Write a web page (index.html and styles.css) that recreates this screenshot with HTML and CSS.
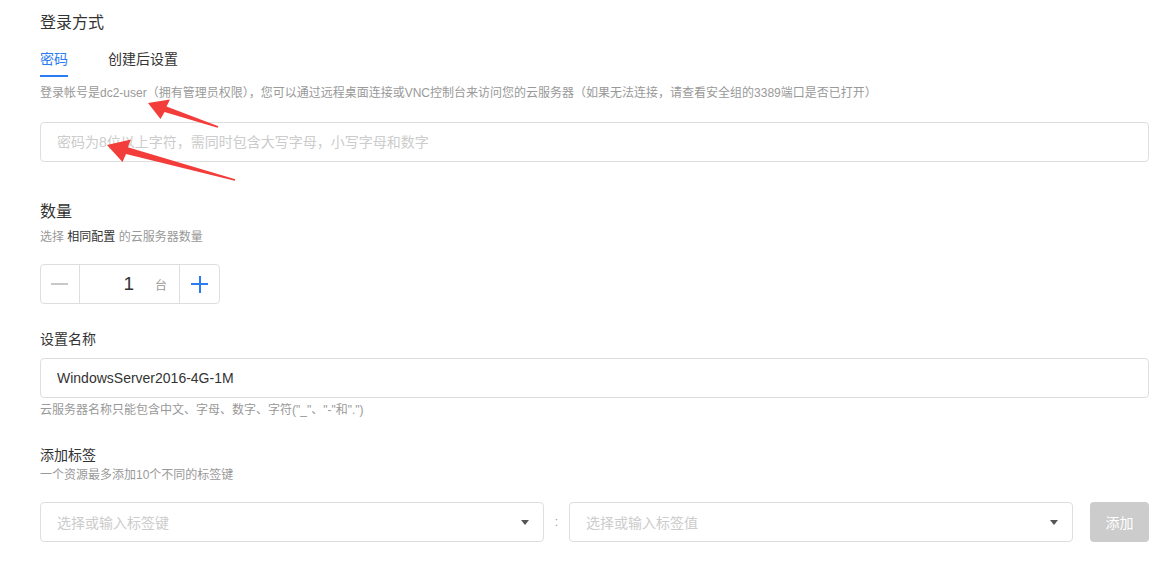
FILE: index.html
```html
<!DOCTYPE html>
<html lang="zh-CN">
<head>
    <meta charset="UTF-8">
    <title>创建云服务器</title>
    <link rel="stylesheet" href="styles.css">
</head>
<body>
    <div class="page">
        <section class="block">
            <h2 class="block-title">登录方式</h2>
            <div class="tabs">
                <span class="tab active">密码</span>
                <span class="tab">创建后设置</span>
            </div>
            <p class="tip">登录帐号是dc2-user（拥有管理员权限），您可以通过远程桌面连接或VNC控制台来访问您的云服务器（如果无法连接，请查看安全组的3389端口是否已打开）</p>
            <input class="field pwd" type="password" placeholder="密码为8位以上字符，需同时包含大写字母，小写字母和数字">
        </section>

        <section class="block count">
            <h2 class="block-title">数量</h2>
            <p class="sub">选择 <b>相同配置</b> 的云服务器数量</p>
            <div class="stepper">
                <span class="step minus"></span>
                <div class="step-value"><span class="num">1</span><span class="unit">台</span></div>
                <span class="step plus"></span>
            </div>
        </section>

        <section class="block name">
            <h3 class="label">设置名称</h3>
            <input class="field name-input" type="text" value="WindowsServer2016-4G-1M">
            <p class="hint">云服务器名称只能包含中文、字母、数字、字符("_"、"-"和".")</p>
        </section>

        <section class="block tags">
            <h3 class="label">添加标签</h3>
            <p class="hint tight">一个资源最多添加10个不同的标签键</p>
            <div class="tag-row">
                <div class="select"><span class="ph">选择或输入标签键</span><i class="caret"></i></div>
                <span class="colon">:</span>
                <div class="select"><span class="ph">选择或输入标签值</span><i class="caret"></i></div>
                <button class="btn-add" disabled>添加</button>
            </div>
        </section>

        <!-- annotation arrows -->
        <svg class="marks" width="300" height="200" viewBox="0 0 300 200">
            <polygon fill="#f23d3a" points="148,103 170,99.5 166.5,106.5 218.4,126.3 217.6,127.7 164.5,112 160.5,119"/>
            <polygon fill="#f23d3a" points="107,145 131,139.5 127.8,147.2 235.3,179.3 234.7,180.7 126,154 122.5,162"/>
        </svg>
    </div>
</body>
</html>
```

FILE: styles.css
```css
body {
    margin: 0;
    background: #fff;
    font-family: "Liberation Sans", "Noto Sans CJK SC", sans-serif;
    color: #333;
}

.page {
    position: relative;
    padding: 11px 8px 20px 40px;
}

.block-title {
    margin: 0;
    font-size: 16px;
    font-weight: normal;
    line-height: 24px;
    color: #333;
}

.tabs {
    display: flex;
    gap: 40px;
    margin-top: 14px;
}

.tab {
    font-size: 14px;
    line-height: 20px;
    padding-bottom: 6px;
    border-bottom: 2px solid transparent;
    color: #333;
}

.tab.active {
    color: #2b7bf3;
    border-bottom-color: #2b7bf3;
}

.tip {
    margin: 7px 0 0;
    font-size: 12px;
    line-height: 18px;
    color: #999;
}

.field {
    display: block;
    box-sizing: border-box;
    width: 100%;
    height: 40px;
    border: 1px solid #dedede;
    border-radius: 4px;
    padding: 0 16px;
    font-family: inherit;
    font-size: 14px;
    color: #333;
    outline: none;
}

.field::placeholder {
    color: #ccc;
}

.pwd {
    margin-top: 20px;
}

.count {
    margin-top: 38px;
}

.sub {
    margin: 4px 0 0;
    font-size: 12px;
    line-height: 18px;
    color: #999;
}

.sub b {
    font-weight: normal;
    color: #333;
}

.stepper {
    display: flex;
    width: 180px;
    height: 40px;
    box-sizing: border-box;
    margin-top: 18px;
    border: 1px solid #dedede;
    border-radius: 4px;
}

.step {
    position: relative;
    width: 38px;
}

.minus {
    border-right: 1px solid #dedede;
}

.plus {
    width: 39px;
    border-left: 1px solid #dedede;
}

.minus::before,
.plus::before,
.plus::after {
    content: "";
    position: absolute;
    left: 10px;
    top: 18px;
    width: 17px;
    height: 2px;
    background: #c8c8c8;
}

.plus::before,
.plus::after {
    left: 11px;
    background: #2b7bf3;
}

.plus::after {
    left: 18.5px;
    top: 10.5px;
    width: 2px;
    height: 17px;
}

.step-value {
    flex: 1;
    display: flex;
    align-items: center;
    justify-content: flex-end;
    padding-right: 12px;
}

.num {
    font-size: 19px;
    color: #333;
    margin-right: 21px;
}

.unit {
    font-size: 12px;
    color: #999;
}

.name {
    margin-top: 25px;
}

.label {
    margin: 0;
    font-size: 14px;
    font-weight: normal;
    line-height: 20px;
    color: #333;
}

.name-input {
    margin-top: 9px;
}

.hint {
    margin: 3px 0 0;
    font-size: 12px;
    line-height: 18px;
    color: #999;
}

.hint.tight {
    margin-top: 1px;
}

.tags {
    margin-top: 26px;
}

.tag-row {
    display: flex;
    align-items: center;
    margin-top: 18px;
}

.select {
    flex: 1;
    display: flex;
    align-items: center;
    justify-content: space-between;
    height: 40px;
    box-sizing: border-box;
    padding: 0 14px 0 16px;
    border: 1px solid #dedede;
    border-radius: 4px;
}

.ph {
    font-size: 14px;
    color: #ccc;
}

.caret {
    width: 0;
    height: 0;
    border-left: 4px solid transparent;
    border-right: 4px solid transparent;
    border-top: 5px solid #555;
}

.colon {
    width: 25px;
    text-align: center;
    font-size: 12px;
    color: #999;
}

.btn-add {
    width: 59px;
    height: 40px;
    margin-left: 17px;
    border: none;
    border-radius: 4px;
    background: #ccc;
    color: #fff;
    font-family: inherit;
    font-size: 14px;
}

.marks {
    position: absolute;
    left: 0;
    top: 0;
    pointer-events: none;
}
```
